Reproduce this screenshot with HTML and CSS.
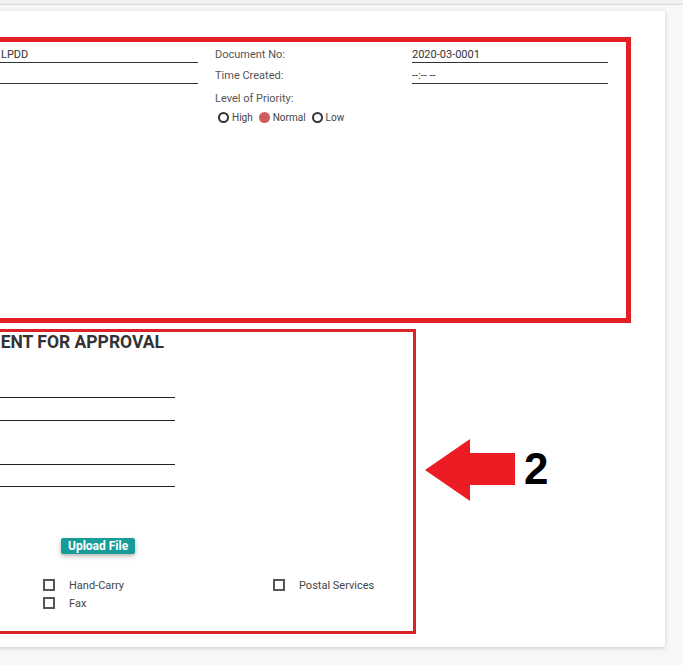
FILE: index.html
```html
<!DOCTYPE html>
<html lang="en">
<head>
<meta charset="utf-8">
<title>Document Routing</title>
<link rel="stylesheet" href="styles.css">
</head>
<body>
<div class="topbar"></div>
<main class="main">
  <section class="card">
    <div class="box box-top">
      <div class="col col-one">
        <div class="field">LPDD</div>
        <div class="field"></div>
      </div>
      <div class="col col-two">
        <div class="label-row">Document No:</div>
        <div class="label-row">Time Created:</div>
        <div class="label-row priority">Level of Priority:</div>
        <div class="radios">
          <span class="radio"></span><span class="radio-text">High</span>
          <span class="radio checked"></span><span class="radio-text">Normal</span>
          <span class="radio"></span><span class="radio-text">Low</span>
        </div>
      </div>
      <div class="col col-three">
        <div class="field value">2020-03-0001</div>
        <div class="field value">--:-- --</div>
      </div>
    </div>

    <div class="box box-bottom">
      <h2 class="heading">DOCUMENT FOR APPROVAL</h2>
      <div class="fields">
        <span class="line p1"></span>
        <span class="line p2"></span>
        <span class="line p3"></span>
        <span class="line p4"></span>
      </div>
      <div class="attach">
        <button class="upload" type="button">Upload File</button>
      </div>
      <div class="modes">
        <label class="mode"><span class="check"></span>Hand-Carry</label>
        <label class="mode"><span class="check"></span>Postal Services</label>
        <label class="mode"><span class="check"></span>Fax</label>
      </div>
    </div>
  </section>
</main>

<div class="annotation">
  <svg class="arrow" width="90" height="62" viewBox="0 0 90 62" aria-hidden="true">
    <polygon points="0,31 45,0 45,14 90,14 90,46 45,46 45,62" fill="#ed1c24"/>
  </svg>
  <span class="num">2</span>
</div>
</body>
</html>
```

FILE: styles.css
```css
* { box-sizing: border-box; }

html, body {
  margin: 0;
  padding: 0;
}

body {
  background: #f7f7f7;
  font-family: Roboto, "Liberation Sans", sans-serif;
  color: #333;
  overflow: hidden;
  width: 683px;
  height: 665px;
  position: relative;
}

.topbar {
  height: 5px;
  background: #f1f1f1;
  border-bottom: 1px solid #dcdcdc;
}

.main {
  padding-top: 6px;
}

.card {
  margin-left: -300px;
  width: 965px;
  height: 636px;
  background: #fff;
  box-shadow: 0 1px 4px rgba(0, 0, 0, 0.18);
  border-radius: 2px;
  padding-top: 26px;
}

.box {
  margin-left: 20px;
}

/* ---------- top box ---------- */
.box-top {
  width: 911px;
  height: 286px;
  border: 5px solid #e41e25;
  display: flex;
  padding: 0 18px 0 275px;
}

.col-one { width: 198px; }
.col-two { width: 197px; margin-left: 17px; }
.col-three { width: 196px; }

.field {
  display: block;
  height: 21px;
  padding: 5px 0 0 1px;
  line-height: 15px;
  font-size: 11px;
  color: #333;
  border-bottom: 1px solid #333;
}

.value { padding-left: 0; }

.label-row {
  height: 21px;
  padding-top: 5px;
  line-height: 15px;
  font-size: 11px;
  color: #555;
}

.label-row.priority {
  margin-top: 2px;
}

.radios {
  display: flex;
  align-items: center;
  margin-top: 2px;
  padding-left: 3px;
  height: 16px;
}

.radio {
  width: 11px;
  height: 11px;
  border: 2px solid #333;
  border-radius: 50%;
  margin-right: 3px;
}

.radio.checked {
  border: none;
  background: #cd5c5c;
}

.radio-text {
  font-size: 10px;
  color: #444;
  margin-right: 6px;
}

/* ---------- bottom box ---------- */
.box-bottom {
  margin-top: 6px;
  width: 696px;
  height: 305px;
  border: 3px solid #dc2229;
  padding-left: 15px;
}

.heading {
  margin: 0;
  width: 426px;
  text-align: right;
  font-size: 17.5px;
  line-height: 20px;
  font-weight: 700;
  color: #333;
  white-space: nowrap;
}

.fields {
  margin-top: 25px;
  padding-left: 112px;
}

.line {
  display: block;
  width: 325px;
  border-bottom: 1px solid #222;
}

.p1 { height: 21px; }
.p2 { height: 23px; }
.p3 { margin-top: 22px; height: 22px; }
.p4 { height: 22px; }

.attach {
  display: flex;
  align-items: center;
  margin-top: 50px;
  height: 17px;
  padding-left: 323px;
}

.upload {
  height: 16px;
  padding: 0 7px;
  border: none;
  border-radius: 2px;
  background: #179c99;
  color: #fff;
  font-family: Roboto, "Liberation Sans", sans-serif;
  font-size: 12px;
  font-weight: 700;
  line-height: 16px;
  box-shadow: 0 2px 4px rgba(0, 0, 0, 0.3);
}

.modes {
  margin-top: 22px;
  margin-left: 305px;
  display: grid;
  grid-template-columns: 230px 230px;
  grid-auto-rows: 18px;
}

.mode {
  display: flex;
  align-items: center;
  font-size: 11px;
  color: #444;
}

.check {
  width: 12px;
  height: 12px;
  border: 2px solid #555;
  margin-right: 14px;
}

/* ---------- annotation overlay ---------- */
.annotation {
  position: absolute;
  left: 425px;
  top: 439px;
}

.arrow {
  display: block;
}

.num {
  position: absolute;
  left: 99px;
  top: 8px;
  font-family: "Liberation Sans", Arial, sans-serif;
  font-weight: 700;
  font-size: 44px;
  line-height: 44px;
  color: #000;
}
```
